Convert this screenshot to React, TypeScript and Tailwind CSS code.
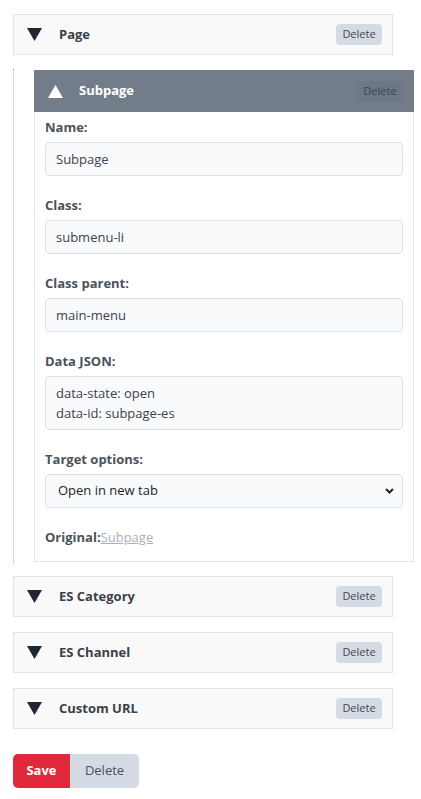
import { useState } from 'react';

const font = { fontFamily: '"Open Sans", "Noto Sans", Arial, sans-serif' };

function Caret({ up, color }: { up?: boolean; color: string }) {
  return (
    <svg width="15" height="13" viewBox="0 0 15 13" className="shrink-0">
      {up ? <polygon points="7.5,0 15,13 0,13" fill={color} /> : <polygon points="0,0 15,0 7.5,13" fill={color} />}
    </svg>
  );
}

function CollapsedRow({ title }: { title: string }) {
  return (
    <div className="flex h-[41px] w-[380px] items-center border border-[#e4e4e4] bg-[#f9f9f9] pl-[13px] pr-[10px]">
      <Caret color="#1f2732" />
      <span className="ml-[17px] text-[13px] font-bold text-[#3a4049]">{title}</span>
      <button className="ml-auto h-[21px] w-[46px] rounded-[4px] bg-[#d5dbe4] text-[11px] text-[#3f4650]">Delete</button>
    </div>
  );
}

function Field({ label, children }: { label: string; children: React.ReactNode }) {
  return (
    <div className="mb-[19px]">
      <div className="mb-[5px] text-[13px] leading-[20px] font-bold text-[#4b525c]">{label}</div>
      {children}
    </div>
  );
}

const inputCls =
  'block h-[34px] w-full rounded-[4px] border border-[#dde2e8] bg-[#f8fafc] px-[10px] text-[13px] text-[#3b424c] outline-none';

export default function App() {
  const [name, setName] = useState('Subpage');
  const [cls, setCls] = useState('submenu-li');
  const [parent, setParent] = useState('main-menu');
  const [json, setJson] = useState('data-state: open\ndata-id: subpage-es');
  const [target, setTarget] = useState('new');

  return (
    <div className="min-h-screen bg-white pl-[13px] pt-[14px]" style={font}>
      <CollapsedRow title="Page" />

      <div className="mt-[14px] border-l border-dotted border-[#b5b5b5] py-[1px] pl-[20px]">
        <div className="w-[380px] border border-[#e4e4e4] border-t-0">
          <div className="-mx-px flex h-[42px] items-center bg-[#737d8a] pl-[14px] pr-[11px]">
            <Caret up color="#ffffff" />
            <span className="ml-[16px] text-[13px] font-bold text-white">Subpage</span>
            <button className="ml-auto h-[21px] w-[46px] rounded-[4px] bg-[#6d7785] text-[11px] text-[#3d4550]">Delete</button>
          </div>
          <div className="px-[10px] pt-[5px] pb-[14px]">
            <Field label="Name:">
              <input className={inputCls} value={name} onChange={(e) => setName(e.target.value)} />
            </Field>
            <Field label="Class:">
              <input className={inputCls} value={cls} onChange={(e) => setCls(e.target.value)} />
            </Field>
            <Field label="Class parent:">
              <input className={inputCls} value={parent} onChange={(e) => setParent(e.target.value)} />
            </Field>
            <Field label="Data JSON:">
              <textarea
                className="block h-[54px] w-full resize-none rounded-[4px] border border-[#dde2e8] bg-[#f8fafc] px-[10px] pt-[6px] text-[13px] leading-[20px] text-[#3b424c] outline-none"
                value={json}
                onChange={(e) => setJson(e.target.value)}
              />
            </Field>
            <Field label="Target options:">
              <div className="relative">
                <select
                  className="block h-[34px] w-full appearance-none rounded-[4px] border border-[#dde2e8] bg-[#f8fafc] pl-[12px] text-[13px] text-[#1f2328] outline-none"
                  value={target}
                  onChange={(e) => setTarget(e.target.value)}
                >
                  <option value="new">Open in new tab</option>
                  <option value="same">Open in same tab</option>
                </select>
                <svg width="9" height="6" viewBox="0 0 9 6" className="pointer-events-none absolute right-[9px] top-[14px]">
                  <path d="M1 1l3.5 3.5L8 1" fill="none" stroke="#1f2328" strokeWidth="2" />
                </svg>
              </div>
            </Field>
            <div className="text-[13px] leading-[20px]">
              <span className="font-bold text-[#4b525c]">Original:</span>
              <a className="text-[#a8b0bb] underline">Subpage</a>
            </div>
          </div>
        </div>
      </div>

      <div className="mt-[13px] flex flex-col gap-[15px]">
        <CollapsedRow title="ES Category" />
        <CollapsedRow title="ES Channel" />
        <CollapsedRow title="Custom URL" />
      </div>

      <div className="mt-[25px] flex">
        <button className="h-[34px] w-[57px] rounded-l-[5px] bg-[#e0293b] text-[13px] font-bold text-white">Save</button>
        <button className="h-[34px] w-[69px] rounded-r-[5px] bg-[#d5dbe4] text-[13px] text-[#4a515b]">Delete</button>
      </div>
    </div>
  );
}
